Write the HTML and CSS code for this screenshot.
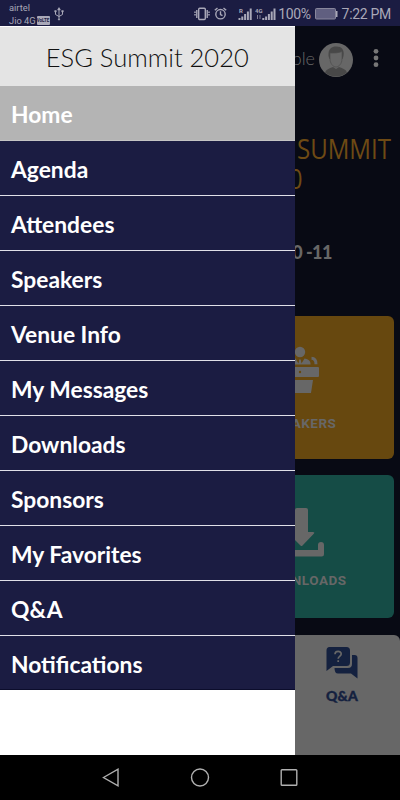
FILE: index.html
```html
<!DOCTYPE html>
<html lang="en">
<head>
    <meta charset="UTF-8">
    <meta name="viewport" content="width=device-width, initial-scale=1.0">
    <title>ESG Summit 2020</title>
    <link rel="stylesheet" href="styles.css">
</head>
<body>

<div class="phone">
    <header class="status-bar">
        <div class="carrier">
            <span>airtel</span>
            <span>Jio 4G <b class="volte">VoLTE</b></span>
        </div>
        <svg class="usb" width="10" height="14" viewBox="0 0 10 14" fill="none" stroke="currentColor">
            <path d="M5 1v11M1.5 4v3.5L5 9.5l3.5-2V4"/>
            <path d="M3.5 3L5 .5 6.500 3zM.7 3.500h1.600v1.500H.7zM7.700 3.500h1.600v1.500H7.700zM4.300 12h1.400v1H4.300z" fill="currentColor" stroke-width=".5"/>
        </svg>
        <div class="status-icons">
            <svg width="16" height="14" viewBox="0 0 16 14" fill="none" stroke="currentColor" stroke-width="1.400">
                <rect x="4.700" y="1.300" width="6.600" height="11.200" rx="1"/>
                <path d="M2.800 3v8M13.200 3v8"/>
                <path d="M1 4.500v5M15 4.500v5" stroke-dasharray="1.500 1"/>
            </svg>
            <svg class="alarm" width="13" height="13" viewBox="0 0 13 13" fill="none" stroke="currentColor" stroke-width="1.400">
                <circle cx="6.500" cy="7.200" r="4.700"/>
                <path d="M6.500 4.300v3.200l2 1.200M.8 3.300L3.500 1M12.200 3.300L9.500 1"/>
            </svg>
            <svg class="signal" width="14" height="14" viewBox="0 0 14 14" fill="currentColor">
                <path d="M.5 13v-2h2v2zM3.300 13V9.500h2V13zM6.100 13V7h2v6zM8.900 13V4.500h2V13zM11.700 13V1.500h2V13z"/>
                <text x="1" y="6" class="signal-text">R</text>
            </svg>
            <svg class="signal-4g" width="21" height="14" viewBox="0 0 21 14" fill="currentColor">
                <path d="M2.500 8v4M5 8v4" stroke="currentColor" stroke-width=".7"/>
                <path d="M7.300 13v-2h2v2zM10.100 13V9.500h2V13zM12.900 13V7h2v6zM15.700 13V4.500h2V13zM18.500 13V1.500h2V13z"/>
                <text x="0" y="6" class="signal-text">4G</text>
            </svg>
            <span class="percent">100%</span>
            <svg class="battery" width="23" height="12" viewBox="0 0 23 12">
                <rect x=".5" y=".5" width="20" height="10.500" rx="1" fill="#605f80" stroke="#88879c"/>
                <path d="M21 3h1.500v6H21z" fill="#a9a8b8"/>
            </svg>
            <span class="time">7:22 PM</span>
        </div>
    </header>

    <div class="screen">
        <main class="page">
            <div class="toolbar">
                <span class="user-name">ple</span>
                <svg class="avatar" width="34" height="34" viewBox="0 0 34 34">
                    <circle cx="17" cy="17" r="17" fill="#676767"/>
                    <path d="M6 29.500c1-3 4-4 8-5.500l3 2 3-2c4 1.500 7 2.500 8 5.500a17 17 0 0 1-22 0z" fill="#484848"/>
                    <path d="M9.500 13C9 6 12 3.500 17.500 3.500c5 0 8 3 7 9.500l-1 3H10.500z" fill="#484848"/>
                    <path d="M11 10c5 .2 9-.2 12-1.500v7c0 5-3 8.500-6 8.500s-6-3.500-6-8.500z" fill="#676767" stroke="#4e4e4e" stroke-width=".7"/>
                </svg>
                <svg class="more" width="6" height="20" viewBox="0 0 6 20" fill="#777">
                    <circle cx="3" cy="3.300" r="2.400"/>
                    <circle cx="3" cy="10" r="2.400"/>
                    <circle cx="3" cy="16.700" r="2.400"/>
                </svg>
            </div>

            <div class="hero">
                <h1><span>SUMMIT</span><span class="year">0</span></h1>
                <p>0 -11</p>
            </div>

            <div class="cards">
                <div class="card speakers">
                    <svg width="38" height="48" viewBox="0 0 38 48" fill="currentColor">
                        <circle cx="19" cy="6" r="5.200"/>
                        <path fill-rule="evenodd" d="M8.500 18.500v-1c0-3 2.500-4.800 6-5l3 5 .8-4h1.400l.8 4 3-5c3 .4 6 2 6 5v1z"/>
                        <path d="M30.500 12.300c3 0 4.500 2 4.500 6" fill="none" stroke="currentColor" stroke-width="3"/>
                        <path fill-rule="evenodd" d="M1 21h36q1 0 1 1v8q0 1-1 1H1q-1 0-1-1v-8q0-1 1-1zm18 3.800a1.200 1.200 0 1 0 0 2.400 1.200 1.200 0 0 0 0-2.400z"/>
                        <path d="M6 34h26l-2 13H8z"/>
                    </svg>
                    <span>SPEAKERS</span>
                </div>
                <div class="card downloads">
                    <svg width="46" height="50" viewBox="0 0 46 50" fill="currentColor">
                        <path d="M19 1h9q2 0 2 2v22h5q2 0 1 1.500L24.500 38.500q-1 1-2 0L10.500 26.500q-1-1.500 1-1.500H17V3q0-2 2-2z"/>
                        <path d="M3 35q3 0 3 3v5h34v-5q0-3 3-3t3 3v9q0 2.500-2.500 2.500h-41Q0 49.500 0 47v-9q0-3 3-3z"/>
                    </svg>
                    <span>DOWNLOADS</span>
                </div>
            </div>

            <div class="bottom-bar">
                <div class="qa">
                    <svg width="32" height="32" viewBox="0 0 32 32" fill="currentColor">
                        <path d="M3.500 0h17Q24 0 24 3.500v12Q24 19 20.500 19H7l-6.500 5V3.500Q.5 0 3.500 0z"/>
                        <path d="M26 8h2.500Q31.500 8 31.500 11v20.500L25 26.500H12Q8.500 26.500 8.500 21H22q4 0 4-4z"/>
                        <path d="M9 7.300c0-4 6.200-3.800 6.200-.3 0 2.500-3 2.400-3 4.800M12.200 13.300v1.700" fill="none" stroke="#676767" stroke-width="1.700"/>
                    </svg>
                    <span>Q&amp;A</span>
                </div>
            </div>
        </main>

        <aside class="drawer">
            <h2>ESG Summit 2020</h2>
            <nav>
                <a class="active">Home</a>
                <a>Agenda</a>
                <a>Attendees</a>
                <a>Speakers</a>
                <a>Venue Info</a>
                <a>My Messages</a>
                <a>Downloads</a>
                <a>Sponsors</a>
                <a>My Favorites</a>
                <a>Q&amp;A</a>
                <a>Notifications</a>
            </nav>
        </aside>
    </div>

    <footer class="nav-bar">
        <svg width="20" height="20" viewBox="0 0 20 20"><path d="M2.500 9.500L17 1.200v16.600z"/></svg>
        <svg width="20" height="20" viewBox="0 0 20 20"><circle cx="10" cy="9.500" r="8.500"/></svg>
        <svg width="20" height="20" viewBox="0 0 20 20"><rect x="2.200" y="1.700" width="15.600" height="15.600" rx=".8"/></svg>
    </footer>
</div>

</body>
</html>
```

FILE: styles.css
```css
* {
    box-sizing: border-box;
}
body {
    margin: 0;
    font-family: Lato, sans-serif;
    background: #000;
}
.phone {
    width: 400px;
    height: 800px;
    display: flex;
    flex-direction: column;
    overflow: hidden;
}

/* status bar */
.status-bar {
    height: 26px;
    display: flex;
    align-items: center;
    padding: 1px 9px 0;
    background: #1b1c42;
    color: #a9a8b8;
    font-family: Roboto, sans-serif;
}
.carrier {
    display: flex;
    flex-direction: column;
    width: 45px;
    font-size: 9.3px;
    line-height: 13px;
    white-space: nowrap;
}
.carrier span {
    display: flex;
    align-items: center;
    gap: 1px;
}
.volte {
    width: 13px;
    border-radius: 1px;
    background: #a9a8b8;
    color: #1b1c42;
    font-size: 4.5px;
    line-height: 9px;
    text-align: center;
}
.usb {
    flex: none;
}
.status-icons {
    flex: 1;
    display: flex;
    align-items: center;
    justify-content: flex-end;
    white-space: nowrap;
}
.alarm {
    margin-left: 4px;
}
.signal {
    margin-left: 11px;
}
.signal-4g {
    margin-left: 3px;
}
.signal-text {
    font-size: 6px;
    font-weight: bold;
}
.percent {
    margin-left: 2px;
    font-size: 14px;
    letter-spacing: -0.4px;
}
.battery {
    margin: 0 4px 0 4px;
}
.time {
    font-size: 14px;
    letter-spacing: -0.3px;
}

/* page behind the drawer */
.screen {
    position: relative;
    height: 729px;
}
.page {
    height: 100%;
    display: flex;
    flex-direction: column;
    background: #080a14;
    color: #676767;
}
.toolbar {
    height: 67px;
    display: flex;
    align-items: center;
    justify-content: flex-end;
    padding-right: 21px;
}
.user-name {
    margin: -4px 4px 0 0;
    font-size: 18px;
    font-weight: 300;
}
.more {
    margin: -3px 0 0 20px;
}
.hero {
    height: 223px;
    padding: 40px 9px 0 0;
}
.hero h1 {
    display: flex;
    flex-direction: column;
    align-items: flex-end;
    margin: 0;
    color: #6e4a14;
    font-family: "Open Sans", sans-serif;
    font-size: 28px;
    font-weight: 500;
    line-height: 30px;
    transform: scaleX(0.86);
    transform-origin: right;
}
.hero .year {
    margin-right: 103px;
}
.hero p {
    margin: 46px 59px 0 0;
    font-size: 18px;
    font-weight: 900;
    line-height: 26px;
    letter-spacing: -0.5px;
    text-align: right;
}
.cards {
    display: flex;
    flex-direction: column;
    align-items: flex-end;
    gap: 16px;
    padding-right: 6px;
}
.card {
    width: 187px;
    height: 143px;
    display: flex;
    flex-direction: column;
    align-items: center;
    border-radius: 6px;
    font-family: Roboto, sans-serif;
    font-size: 13.5px;
    font-weight: 700;
    line-height: 18px;
}
.speakers {
    padding: 30px 2px 0 0;
    background: #67480f;
}
.speakers span {
    margin: 20px 0 0 3px;
    letter-spacing: 0.5px;
}
.downloads {
    padding-top: 32px;
    background: #154c46;
}
.downloads span {
    margin: 14px 0 0 6px;
    letter-spacing: 0.5px;
}
.bottom-bar {
    flex: 1;
    display: flex;
    justify-content: flex-end;
    margin-top: 17px;
    padding: 12px 42px 0 0;
    border-radius: 6px 6px 0 0;
    background: #676767;
    color: #14213f;
}
.qa {
    display: flex;
    flex-direction: column;
    align-items: center;
    width: 32px;
    font-size: 14px;
    font-weight: 900;
    line-height: 18px;
}
.qa span {
    margin-top: 8px;
    -webkit-text-stroke: 0.4px;
}

/* side menu */
.drawer {
    position: absolute;
    top: 0;
    left: 0;
    width: 294.5px;
    height: 100%;
    background: #fff;
}
.drawer h2 {
    height: 60px;
    margin: 0;
    border-top: 1px solid #fff;
    background: #e4e4e4;
    color: #111;
    font-size: 25.5px;
    font-weight: 300;
    line-height: 61px;
    text-align: center;
}
.drawer nav a {
    display: block;
    height: 55px;
    padding-left: 11px;
    border-bottom: 1px solid #e0e0e8;
    background: #1b1c42;
    color: #fff;
    font-size: 22.8px;
    font-weight: 700;
    line-height: 57px;
}
.drawer nav a.active {
    background: #b4b4b4;
    border-color: #c4c4c4;
}
.drawer nav a:last-child {
    height: 54px;
    border-color: #0c0d2c;
}

/* system buttons */
.nav-bar {
    height: 45px;
    display: flex;
    align-items: center;
    justify-content: center;
    gap: 69px;
    background: #000;
}
.nav-bar svg {
    fill: none;
    stroke: #b0b0b0;
    stroke-width: 1.4;
}
```
